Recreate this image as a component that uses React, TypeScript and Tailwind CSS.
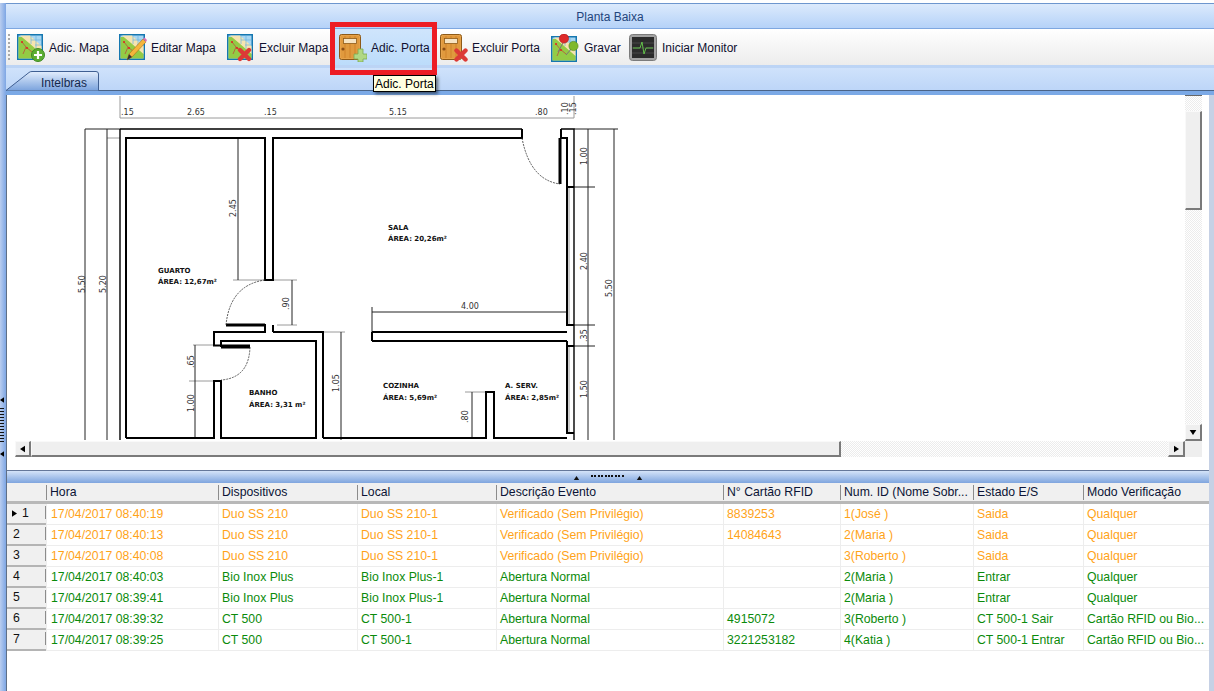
import React from 'react';

const columns = ['Hora', 'Dispositivos', 'Local', 'Descrição Evento', 'N° Cartão RFID', 'Num. ID (Nome Sobr...', 'Estado E/S', 'Modo Verificação'];

const ORANGE = 'text-[#ffa318]';
const GREEN = 'text-[#0a8a0a]';

const rows = [
  { color: ORANGE, cells: ['17/04/2017 08:40:19', 'Duo SS 210', 'Duo SS 210-1', 'Verificado (Sem Privilégio)', '8839253', '1(José )', 'Saida', 'Qualquer'] },
  { color: ORANGE, cells: ['17/04/2017 08:40:13', 'Duo SS 210', 'Duo SS 210-1', 'Verificado (Sem Privilégio)', '14084643', '2(Maria )', 'Saida', 'Qualquer'] },
  { color: ORANGE, cells: ['17/04/2017 08:40:08', 'Duo SS 210', 'Duo SS 210-1', 'Verificado (Sem Privilégio)', '', '3(Roberto )', 'Saida', 'Qualquer'] },
  { color: GREEN, cells: ['17/04/2017 08:40:03', 'Bio Inox Plus', 'Bio Inox Plus-1', 'Abertura Normal', '', '2(Maria )', 'Entrar', 'Qualquer'] },
  { color: GREEN, cells: ['17/04/2017 08:39:41', 'Bio Inox Plus', 'Bio Inox Plus-1', 'Abertura Normal', '', '2(Maria )', 'Entrar', 'Qualquer'] },
  { color: GREEN, cells: ['17/04/2017 08:39:32', 'CT 500', 'CT 500-1', 'Abertura Normal', '4915072', '3(Roberto )', 'CT 500-1 Sair', 'Cartão RFID ou Bio...'] },
  { color: GREEN, cells: ['17/04/2017 08:39:25', 'CT 500', 'CT 500-1', 'Abertura Normal', '3221253182', '4(Katia )', 'CT 500-1 Entrar', 'Cartão RFID ou Bio...'] },
];

const GRID = 'grid grid-cols-[39px_172px_139px_139px_227px_117px_133px_110px_126px]';

function MapBase() {
  return (
    <>
      <rect x="0.75" y="0.75" width="24.5" height="24.5" fill="#a8d6f2" stroke="#1577b0" strokeWidth="1.5" />
      <path d="M1.5 3H8L24.5 19V24.5H1.5Z" fill="#93cb45" />
      <path d="M3 1.5H13L24.5 12V20L12 9Z" fill="#f6e4b0" />
      <path d="M14 1.5V10M19 1.5V15M14 6H24.5M18 11H24.5" stroke="#6cb4e0" strokeWidth="0.7" fill="none" />
      <path d="M5 8L9 13L6 20M9 13L15 18" stroke="#b9503a" strokeWidth="0.8" fill="none" />
      <circle cx="5" cy="8" r="1" fill="#e02020" />
      <circle cx="10" cy="14" r="1" fill="#e02020" />
    </>
  );
}

function RedX({ x, y }: { x: number; y: number }) {
  return (
    <g transform={`translate(${x} ${y})`}>
      <path d="M2 2L11 11M11 2L2 11" stroke="#dc3a36" strokeWidth="4.4" strokeLinecap="round" />
    </g>
  );
}

function MapIcon({ badge }: { badge: 'add' | 'edit' | 'del' }) {
  return (
    <svg width="28" height="28" viewBox="0 0 28 28" className="shrink-0">
      <MapBase />
      {badge === 'add' && (
        <g>
          <circle cx="21" cy="21" r="6.5" fill="#5cae32" stroke="#3f8a22" />
          <path d="M21 17V25M17 21H25" stroke="#fff" strokeWidth="2.2" />
        </g>
      )}
      {badge === 'edit' && (
        <g>
          <path d="M8 26L10 20L24 5L27 8L13 23Z" fill="#f5b53c" stroke="#a86f16" strokeWidth="0.6" />
          <path d="M24 5L25.5 3.5L28 6L27 8Z" fill="#d96fb0" />
          <path d="M8 26L10 20L13 23Z" fill="#333" />
        </g>
      )}
      {badge === 'del' && <RedX x={11} y={14} />}
    </svg>
  );
}

function DoorIcon({ badge }: { badge: 'add' | 'del' }) {
  return (
    <svg width="28" height="28" viewBox="0 0 28 28" className="shrink-0">
      <rect x="0.5" y="0.5" width="21" height="25" rx="2" fill="#e6a24a" stroke="#8e5a18" />
      <path d="M2 2H20V24H2Z" fill="#e09a3e" />
      <path d="M6 2V24M11 2V24M16 2V24" stroke="#c87a22" strokeWidth="0.7" />
      <rect x="4.5" y="4.5" width="13" height="5" fill="#f6e3c2" stroke="#8e5a18" strokeWidth="0.8" />
      <circle cx="4" cy="15" r="1.6" fill="#8a4d14" />
      {badge === 'add' ? (
        <path d="M15 20H19V15H24V20H28V25H24V28H19V25H15Z" fill="#b0d884" stroke="#7cab50" strokeWidth="0.8" />
      ) : (
        <RedX x={14.5} y={14.5} />
      )}
    </svg>
  );
}

function SaveIcon() {
  return (
    <svg width="28" height="28" viewBox="0 0 28 28" className="shrink-0">
      <g transform="translate(0 2)">
        <MapBase />
      </g>
      <path d="M12 9L7 18" stroke="#777" strokeWidth="1" />
      <path d="M21 14L15 21" stroke="#777" strokeWidth="1" />
      <circle cx="13" cy="4.5" r="4.6" fill="#de2a2a" stroke="#a81818" strokeWidth="0.6" />
      <circle cx="22.5" cy="12" r="4.6" fill="#7fb92e" stroke="#55861a" strokeWidth="0.6" />
    </svg>
  );
}

function MonitorIcon() {
  return (
    <svg width="28" height="28" viewBox="0 0 28 28" className="shrink-0">
      <rect x="0.5" y="0.5" width="27" height="26" rx="3" fill="#a2a2a2" stroke="#7b7b7b" />
      <rect x="3" y="3" width="22" height="21" fill="#2b2b2b" />
      <path d="M3 9H25M3 14H25M3 19H25" stroke="#555" strokeWidth="0.7" />
      <path d="M4 14H11L13 8L15 20L17 14H24" stroke="#63c04a" strokeWidth="1" fill="none" />
    </svg>
  );
}

const tools = [
  { label: 'Adic. Mapa', icon: <MapIcon badge="add" />, cls: 'ml-[4px] w-[99px] pl-[3px] gap-[4px]' },
  { label: 'Editar Mapa', icon: <MapIcon badge="edit" />, cls: 'ml-[3px] w-[105px] pl-[3px] gap-[4px]' },
  { label: 'Excluir Mapa', icon: <MapIcon badge="del" />, cls: 'ml-[3px] w-[108px] pl-[3px] gap-[4px]' },
  { label: 'Adic. Porta', icon: <DoorIcon badge="add" />, cls: 'ml-[3px] w-[97px] pl-[4px] gap-[4px] bg-gradient-to-b from-[#cfe5fc] to-[#bcdcfb]' },
  { label: 'Excluir Porta', icon: <DoorIcon badge="del" />, cls: 'ml-[5px] w-[108px] pl-[3px] gap-[4px]' },
  { label: 'Gravar', icon: <SaveIcon />, cls: 'ml-[3px] w-[78px] pl-[3px] gap-[5px]' },
  { label: 'Iniciar Monitor', icon: <MonitorIcon />, cls: 'w-[120px] pl-[3px] gap-[5px]' },
];

function Triangle({ dir, className }: { dir: 'up' | 'down' | 'left' | 'right'; className?: string }) {
  const points = { up: '0,6 4,0 8,6', down: '0,0 8,0 4,6', left: '6,0 6,8 0,4', right: '0,0 6,4 0,8' }[dir];
  const box = dir === 'up' || dir === 'down' ? '0 0 8 6' : '0 0 6 8';
  return (
    <svg viewBox={box} className={className}>
      <polygon points={points} fill="currentColor" />
    </svg>
  );
}

// bevelled scrollbar part
const BEVEL = 'bg-[#efefef] border-l border-t border-[#f9f9f9] border-r-2 border-b-2 border-r-[#7a7a7a] border-b-[#7a7a7a]';
const CHECKER = 'bg-[image:repeating-conic-gradient(#ececec_0%_25%,#ffffff_0%_50%)] bg-[length:2px_2px]';

const thick = [
  'M126 438V138H265V280H273V138H522V129',
  'M226 325H265V332H214V345.5H250',
  'M273 332V325M273 332H323V438',
  'M221 347V341H316V438H221V381H214V438H126',
  'M323 438H486V392H494V438H567',
  'M372 332H567M372 341H567M372 332V341',
  'M561 129V138H567V187H574M560 138V184',
  'M567 187V325H574M567 346V341M567 346H574M567 346V433H574',
];
const walls = ['M120 129H522M120 129V440M561 129H574V440'];
const thin = [
  'M107 129V440M85 129V440M85 129H120',
  'M238 138V280M292 280V325M195 345V438',
  'M372 307V332M372 312H567M588 129V440M614 129V440M574 129H618',
  'M574 187H595M574 325H595M574 346H595M472 392V438M341 332V440',
];
const gray = [
  'M120 118H574M120 96V118M574 96V118',
  'M107 138H120M233 280H265M273 280H297M277 325H297M193 345H214M189 381H214M323 332H345M465 392H486M569 188V324M569 347V432',
];

const labels: [number, number, string][] = [
  [158, 273, 'GUARTO'], [158, 284, 'ÁREA: 12,67m²'],
  [249, 395, 'BANHO'], [249, 407, 'ÁREA: 3,31 m²'],
  [388, 230, 'SALA'], [388, 241, 'ÁREA: 20,26m²'],
  [383, 388, 'COZINHA'], [383, 400, 'ÁREA: 5,69m²'],
  [505, 388, 'A. SERV.'], [505, 400, 'ÁREA: 2,85m²'],
];
const dims: [number, number, string, boolean?][] = [
  [121, 115, '.15'], [187, 115, '2.65'], [264, 115, '.15'], [389, 115, '5.15'], [535, 115, '.80'],
  [85, 293, '5.50', true], [106, 293, '5.20', true], [236, 217, '2.45', true], [289, 310, '.90', true],
  [194, 368, '.65', true], [194, 412, '1.00', true], [339, 392, '1.05', true], [468, 423, '.80', true],
  [587, 165, '1.00', true], [587, 270, '2.40', true], [587, 342, '.35', true], [587, 398, '1.50', true],
  [612, 297, '5.50', true], [461, 309, '4.00'], [568, 115, '.10', true], [576, 115, '.15', true],
];

function FloorPlan() {
  return (
    <svg viewBox="15 95 1170 346" className="block w-full h-full font-['DejaVu_Sans',sans-serif]">
      <path d={gray.join(' ')} stroke="#9a9a9a" strokeWidth="1" fill="none" />
      <path d={thin.join(' ')} stroke="#222" strokeWidth="1" fill="none" />
      <path d={walls.join(' ')} stroke="#000" strokeWidth="1.4" fill="none" />
      <path d={thick.join(' ')} stroke="#000" strokeWidth="2" fill="none" />
      <path d="M226 325H265M560 138V184M221 347H250" stroke="#000" strokeWidth="3" fill="none" />
      <path d="M265 280Q230 285 226 325M250 347Q249 378 221 380M522 138Q530 180 560 184" stroke="#333" strokeWidth="0.8" strokeDasharray="2 1" fill="none" />
      {labels.map(([x, y, t]) => (
        <text key={t} x={x} y={y} fontSize="7" fontWeight="700" fill="#111">{t}</text>
      ))}
      {dims.map(([x, y, t, rotated]) => (
        <text key={`${x}-${y}`} x={x} y={y} fontSize="8" fill="#333" transform={rotated ? `rotate(-90 ${x} ${y})` : undefined}>{t}</text>
      ))}
    </svg>
  );
}

export default function App() {
  return (
    <div className="relative w-[1214px] h-[691px] overflow-hidden bg-white pt-[3px] flex text-[12px] leading-none font-['Liberation_Sans',Arial,sans-serif]">
      <div className="w-[6px] shrink-0 bg-gradient-to-r from-[#b9cdef] to-[#7ea6e4] flex flex-col items-start pt-[394px] text-black">
        <Triangle dir="left" className="w-[4px] h-[6px]" />
        <div className="mt-[5px] h-[34px] w-[4px] bg-[repeating-linear-gradient(#111_0px,#111_1px,transparent_1px,transparent_3px)]" />
        <Triangle dir="left" className="mt-[9px] w-[4px] h-[6px]" />
      </div>

      <div className="flex-1 flex flex-col min-w-0">
        <div className="h-[25px] shrink-0 pt-[1px] border-t border-[#6d96ce] bg-gradient-to-b from-[#dceafc] to-[#b5d2f8] flex items-center justify-center text-[#23457c]">
          Planta Baixa
        </div>

        <div className="h-[40px] shrink-0 border-t border-[#7ea7e0] border-b-[3px] border-b-[#bcd4f5] bg-gradient-to-b from-white to-[#ececec] flex items-stretch">
          <div className="ml-[2px] my-[5px] w-[2px] border-l-2 border-dotted border-[#a9a9a9]" />
          <div className="flex items-stretch">
            {tools.map(t => (
              <div key={t.label} className={`flex items-center pt-[1px] text-[#101030] ${t.cls}`}>
                {t.icon}
                <span className="whitespace-nowrap">{t.label}</span>
              </div>
            ))}
          </div>
        </div>

        <div className="h-[27px] shrink-0 bg-gradient-to-b from-[#cfe2fb] to-[#b9d3f7] flex flex-col">
          <div className="relative h-[23px] shrink-0 border-b border-[#4a6488]">
            <svg width="100" height="23" className="absolute left-0 top-0">
              <defs>
                <linearGradient id="tab" x1="0" y1="0" x2="0" y2="1">
                  <stop offset="0" stopColor="#e3eefd" />
                  <stop offset="1" stopColor="#7ba3dd" />
                </linearGradient>
              </defs>
              <path d="M0 22.5L23 4.5Q24 3.5 26 3.5H90Q92.5 3.5 92.5 6V22.5" fill="url(#tab)" stroke="#3f5f92" />
            </svg>
            <span className="absolute left-[35px] top-[9px] text-[#15294d]">Intelbras</span>
          </div>
          <div className="flex-1 bg-[#7ba9e6]" />
        </div>

        <div className="flex-1 flex min-h-0">
          <div className="flex-1 flex flex-col border-l border-[#5f6f86] min-w-0">
            <div className="h-[375px] shrink-0 pl-[8px] pr-[7px] flex flex-col">
              <div className="h-[346px] flex">
                <div className="flex-1 min-w-0">
                  <FloorPlan />
                </div>
                <div className="w-[17px] shrink-0 flex flex-col border-t border-[#666]">
                  <div className={`h-[15px] ${CHECKER}`} />
                  <div className={`h-[99px] ${BEVEL}`} />
                  <div className={`flex-1 ${CHECKER}`} />
                  <div className={`h-[17px] flex items-center justify-center text-black ${BEVEL}`}>
                    <Triangle dir="down" className="w-[8px] h-[5px]" />
                  </div>
                </div>
              </div>
              <div className="h-[16px] flex">
                <div className={`w-[16px] flex items-center justify-center text-black ${BEVEL}`}>
                  <Triangle dir="left" className="w-[5px] h-[8px]" />
                </div>
                <div className={`w-[810px] ${BEVEL}`} />
                <div className={`flex-1 ${CHECKER}`} />
                <div className={`w-[17px] flex items-center justify-center text-black ${BEVEL}`}>
                  <Triangle dir="right" className="w-[5px] h-[8px]" />
                </div>
                <div className="w-[17px] bg-[#eeeeee]" />
              </div>
            </div>

            <div className="h-[13px] shrink-0 border-t border-[#65789a] bg-gradient-to-b from-[#d4e3f8] to-[#7fa5de] flex items-center justify-center gap-[11px] text-[#111]">
              <Triangle dir="up" className="w-[7px] h-[4px] mt-[2px]" />
              <div className="w-[34px] h-[2px] -mt-[2px] bg-[repeating-linear-gradient(90deg,#111_0px,#111_2px,transparent_2px,transparent_3.4px)]" />
              <Triangle dir="up" className="w-[7px] h-[4px] mt-[2px]" />
            </div>

            <div className="flex-1 bg-white text-[12.25px]">
              <div className={`${GRID} h-[21px] bg-[#f0f0f0] border-b-[3px] border-b-[#b8b8b8] text-[#0b1436]`}>
                <div />
                {columns.map(c => (
                  <div key={c} className="flex h-[15px] mt-[2px] border-l border-[#8c8c8c] pl-[3px] items-center whitespace-nowrap overflow-hidden">
                    {c}
                  </div>
                ))}
              </div>
              {rows.map((r, i) => (
                <div key={i} className={`${GRID} h-[21px] border-b border-[#ededed]`}>
                  <div className="relative bg-[#f0f0f0] border-b-2 border-b-[#b4b4b4] -mb-px flex items-center text-[#111]">
                    {i === 0 && <Triangle dir="right" className="absolute left-[5px] top-[5px] w-[5px] h-[9px] text-black" />}
                    <span className={i === 0 ? 'pl-[15px]' : 'pl-[6px]'}>{i + 1}</span>
                    <span className="absolute right-0 top-[2px] h-[13px] w-px bg-[#8c8c8c]" />
                  </div>
                  {r.cells.map((c, j) => (
                    <div key={j} className={`flex items-center whitespace-nowrap overflow-hidden border-l border-[#ededed] ${j === 0 ? 'pl-[4px]' : 'pl-[3px]'} ${r.color}`}>
                      {c}
                    </div>
                  ))}
                </div>
              ))}
            </div>
          </div>
          <div className="w-[5px] shrink-0 bg-[#c6d1e5]" />
        </div>
      </div>

      <div className="absolute left-[330px] top-[22px] w-[107px] h-[53px] border-[5px] border-[#ed1c24]" />
      <div className="absolute left-[373px] top-[75px] w-[63px] h-[17px] border border-black bg-[#ffffe1] text-black pl-[1px] flex items-center whitespace-nowrap shadow-[2px_2px_3px_rgba(0,0,0,0.5)]">
        Adic. Porta
      </div>
    </div>
  );
}
